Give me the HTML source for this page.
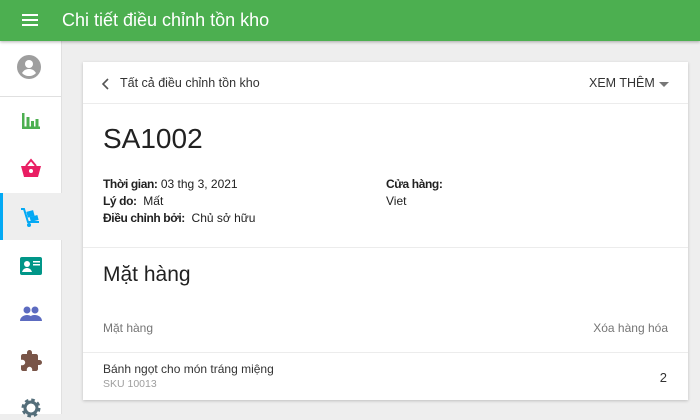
<!DOCTYPE html>
<html><head><meta charset="utf-8"><style>
*{box-sizing:border-box;margin:0;padding:0}
body{width:700px;height:414px;overflow:hidden;background:#eeeeee;font-family:"Liberation Sans",sans-serif;position:relative;color:#212121}
.top{position:absolute;left:0;top:0;width:700px;height:41px;background:#4caf50;box-shadow:0 1px 3px rgba(0,0,0,.3);z-index:2}
.top .t{position:absolute;left:62px;top:10px;color:#fff;font-size:18px}
.side{position:absolute;left:0;top:41px;width:62px;height:373px;background:#fff;border-right:1px solid #e0e0e0}
.ic{position:absolute;left:19px;width:24px;height:24px}
.card{position:absolute;left:83px;top:62px;width:605px;height:338px;background:#fff;box-shadow:0 1px 3px rgba(0,0,0,.2)}
.hr{position:absolute;left:0;width:605px;height:1px;background:#ececec}
.a{position:absolute;font-size:12px;white-space:nowrap}
b{font-weight:bold;letter-spacing:-0.4px}
</style></head><body>
<div class="top">
<svg style="position:absolute;left:22px;top:13px" width="16" height="14"><rect y="1" width="16" height="2" fill="#fff"/><rect y="6" width="16" height="2" fill="#fff"/><rect y="11" width="16" height="2" fill="#fff"/></svg>
<div class="t">Chi tiết điều chỉnh tồn kho</div></div>
<div class="side">
<svg class="ic" style="top:14px;left:17px" width="28" height="28" viewBox="0 0 24 24"><circle cx="12" cy="12" r="12" fill="#9e9e9e"/><circle cx="12" cy="9" r="4" fill="#fff"/><path d="M5 18c2-3 4-4 7-4s5 1 7 4c-2 2-4 3-7 3s-5-1-7-3z" fill="#fff"/></svg>
<div style="position:absolute;left:0;top:55px;width:62px;height:1px;background:#e0e0e0"></div>
<svg class="ic" style="top:68px" viewBox="0 0 24 24"><rect x="3" y="4" width="2.5" height="16" fill="#4caf50"/><rect x="3" y="17.5" width="18" height="2.5" fill="#4caf50"/><rect x="7.5" y="8" width="3" height="11" fill="#4caf50"/><rect x="12" y="12" width="3" height="7" fill="#4caf50"/><rect x="16.5" y="10" width="3" height="9" fill="#4caf50"/></svg>
<svg class="ic" style="top:116px" viewBox="0 0 24 24"><path d="M2 9h20l-3 11H5z" fill="#e91e63"/><path d="M7 9l5-6 5 6" fill="none" stroke="#e91e63" stroke-width="2"/><circle cx="12" cy="14" r="2" fill="#fff"/></svg>
<div style="position:absolute;left:0;top:152px;width:62px;height:47px;background:#eeeeee"></div>
<div style="position:absolute;left:0;top:152px;width:3px;height:47px;background:#03a9f4"></div>
<svg class="ic" style="top:164px" viewBox="0 0 24 24"><path d="M2 4h3l4 13h11" fill="none" stroke="#03a9f4" stroke-width="2"/><rect x="8" y="6" width="7" height="6" fill="#03a9f4" transform="rotate(-15 11 9)"/><rect x="11" y="11" width="8" height="5" fill="#03a9f4" transform="rotate(-15 15 13)"/><circle cx="10" cy="20" r="2" fill="#03a9f4"/></svg>
<svg class="ic" style="top:213px" viewBox="0 0 24 24"><rect x="1" y="3" width="22" height="18" rx="2" fill="#009688"/><circle cx="8" cy="10" r="3" fill="#fff"/><path d="M3 18c1-3 3-4 5-4s4 1 5 4z" fill="#fff"/><rect x="14" y="7" width="7" height="1.5" fill="#fff"/><rect x="14" y="10" width="7" height="1.5" fill="#fff"/></svg>
<svg class="ic" style="top:261px" viewBox="0 0 24 24"><circle cx="8" cy="8" r="3.5" fill="#5c6bc0"/><circle cx="16" cy="8" r="3.5" fill="#5c6bc0"/><path d="M1 19c0-4 4-6 7-6s7 2 7 6zM13 19c0-3 0-4-1-5 1-1 3-1 4-1 3 0 7 2 7 6z" fill="#5c6bc0"/></svg>
<svg class="ic" style="top:308px" viewBox="0 0 24 24"><path d="M20.5 11H19V7c0-1.1-.9-2-2-2h-4V3.5a2.5 2.5 0 0 0-5 0V5H4c-1.1 0-2 .9-2 2v3.8h1.5a2.7 2.7 0 0 1 0 5.4H2V20c0 1.1.9 2 2 2h3.8v-1.5a2.7 2.7 0 0 1 5.4 0V22H17c1.1 0 2-.9 2-2v-4h1.5a2.5 2.5 0 0 0 0-5z" fill="#795548"/></svg>
<svg class="ic" style="top:355px" viewBox="0 0 24 24"><circle cx="12" cy="12" r="7" fill="none" stroke="#546e7a" stroke-width="5" stroke-dasharray="3 2.5"/><circle cx="12" cy="12" r="6" fill="none" stroke="#546e7a" stroke-width="3"/></svg>
</div>
<div class="card">
<svg style="position:absolute;left:19px;top:16px" width="8" height="12"><path d="M6 1L1 6l5 5" fill="none" stroke="#555" stroke-width="1.6"/></svg>
<div class="a" style="left:37px;top:14px;font-size:12.5px;color:#333">Tất cả điều chỉnh tồn kho</div>
<div class="a" style="left:506px;top:14px;font-size:12.5px;color:#333">XEM THÊM</div>
<svg style="position:absolute;left:576px;top:20px" width="10" height="6"><path d="M0 0h10L5 5z" fill="#777"/></svg>
<div class="hr" style="top:41px"></div>
<div class="a" style="left:20px;top:61px;font-size:28px;color:#212121">SA1002</div>
<div class="a" style="left:20px;top:115px"><b>Thời gian:</b> 03 thg 3, 2021</div>
<div class="a" style="left:20px;top:132px"><b>Lý do:</b>&nbsp; Mất</div>
<div class="a" style="left:20px;top:149px"><b>Điều chỉnh bởi:</b>&nbsp; Chủ sở hữu</div>
<div class="a" style="left:303px;top:115px"><b>Cửa hàng:</b></div>
<div class="a" style="left:303px;top:132px">Viet</div>
<div class="hr" style="top:185px"></div>
<div class="a" style="left:20px;top:201px;font-size:21px;color:#212121">Mặt hàng</div>
<div class="a" style="left:20px;top:259px;color:#757575">Mặt hàng</div>
<div class="a" style="right:20px;top:259px;color:#757575">Xóa hàng hóa</div>
<div class="hr" style="top:290px"></div>
<div class="a" style="left:20px;top:300px;color:#333">Bánh ngọt cho món tráng miệng</div>
<div class="a" style="left:20px;top:316px;font-size:10.5px;color:#9e9e9e">SKU 10013</div>
<div class="a" style="right:21px;top:308px;font-size:13px;color:#333">2</div>
</div>
</body></html>
